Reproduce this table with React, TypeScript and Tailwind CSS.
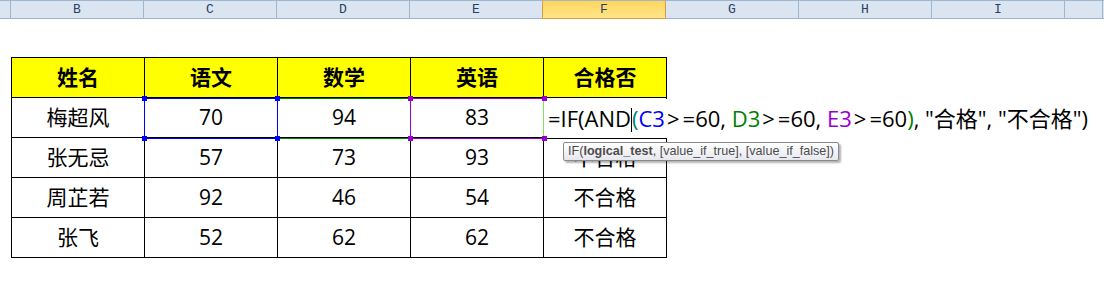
import React from "react";

const cols = [
  { l: "", w: 11 },
  { l: "B", w: 133 },
  { l: "C", w: 133 },
  { l: "D", w: 133 },
  { l: "E", w: 133 },
  { l: "F", w: 124, active: true },
  { l: "G", w: 133 },
  { l: "H", w: 133 },
  { l: "I", w: 133 },
  { l: "", w: 38 },
];

const rows = [
  ["梅超风", "70", "94", "83", ""],
  ["张无忌", "57", "73", "93", "不合格"],
  ["周芷若", "92", "46", "54", "不合格"],
  ["张飞", "52", "62", "62", "不合格"],
];

const heads = ["姓名", "语文", "数学", "英语", "合格否"];
const widths = ["w-[133px]", "w-[133px]", "w-[133px]", "w-[133px]", "w-[123px]"];

function Handles({ color }: { color: string }) {
  const base = "absolute w-[5px] h-[5px] " + color;
  return (
    <>
      <div className={base + " -left-[3px] -top-[3px]"} />
      <div className={base + " -right-[3px] -top-[3px]"} />
      <div className={base + " -left-[3px] -bottom-[3px]"} />
      <div className={base + " -right-[3px] -bottom-[3px]"} />
    </>
  );
}

const ge = <span className="ml-[2px] mr-[3px]">&gt;</span>;

export default function App() {
  return (
    <div
      className="relative w-[1104px] h-[281px] bg-white overflow-hidden"
      style={{ fontFamily: '"Open Sans", "Noto Sans CJK SC", sans-serif' }}
    >
      {/* column headers */}
      <div className="flex h-[19px] bg-[#dbe5f1] border-t border-b border-[#9eb6ce]">
        {cols.map((c, i) => (
          <div
            key={i}
            className={
              "shrink-0 flex items-center justify-center text-[13px] leading-none text-[#27415f] " +
              (c.active
                ? "bg-gradient-to-b from-[#ffd45a] to-[#ffe78c] border-l border-r border-[#e29a3b] -ml-px -mb-px border-b"
                : "border-r border-[#9eb6ce]")
            }
            style={{ width: c.w, fontFamily: '"Liberation Mono", monospace' }}
          >
            {c.l}
          </div>
        ))}
      </div>

      {/* table */}
      <div className="ml-[11px] mt-[38px] w-fit border-l border-t border-black">
        <div className="flex h-[40px] bg-[#ffff00]">
          {heads.map((h, i) => (
            <div
              key={i}
              className={
                widths[i] +
                " shrink-0 border-r border-b border-black flex items-center justify-center text-[21px] font-bold text-black"
              }
            >
              {h}
            </div>
          ))}
        </div>
        {rows.map((r, ri) => (
          <div key={ri} className="flex h-[40px]">
            {r.map((v, i) => (
              <div
                key={i}
                className={
                  widths[i] +
                  " shrink-0 border-r border-b border-black flex items-center justify-center text-[21px] text-black"
                }
              >
                {v}
              </div>
            ))}
          </div>
        ))}
      </div>

      {/* formula editor overlay in F3 */}
      <div className="absolute left-[544px] top-[99px] w-[560px] h-[39px] bg-white pl-[4px] text-[22px] leading-[39px] text-black whitespace-pre">
        <span>=IF(AND</span>
        <span className="inline-block w-px h-[24px] bg-black align-[-5px]" />
        <span className="text-[#008080]">(</span>
        <span className="text-[#0000ff]">C3</span>
        <span>{ge}=60, </span>
        <span className="text-[#008000]">D3</span>
        <span>{ge}=60, </span>
        <span className="text-[#9900cc]">E3</span>
        <span>{ge}=60</span>
        <span className="text-[#008000]">)</span>
        <span>, "合格", "不合格")</span>
      </div>
      <div className="absolute left-[543px] top-[98px] w-px h-[41px] bg-[#80e060]" />
      <div className="absolute left-[543px] top-[138px] w-[124px] h-px bg-black" />

      {/* reference range highlights */}
      <div className="absolute left-[277px] top-[98px] w-[134px] h-[41px] border border-[#008000]">
        <Handles color="bg-[#008000]" />
      </div>
      <div className="absolute left-[410px] top-[98px] w-[134px] h-[41px] border border-[#9900cc] border-r-0">
        <Handles color="bg-[#9900cc]" />
      </div>
      <div className="absolute left-[144px] top-[98px] w-[134px] h-[41px] border border-[#0000ff]">
        <Handles color="bg-[#0000ff]" />
      </div>

      {/* tooltip */}
      <div
        className="absolute left-[563px] top-[142px] h-[19px] px-[4px] flex items-center rounded-[2px] border border-[#8a8a8a] bg-gradient-to-b from-white to-[#e7e8ee] text-[12.6px] text-[#4c4c4c] whitespace-nowrap shadow-[2px_2px_2px_rgba(0,0,0,0.3)]"
        style={{ fontFamily: '"Liberation Sans", sans-serif' }}
      >
        IF(<span className="font-bold">logical_test</span>, [value_if_true], [value_if_false])
      </div>
    </div>
  );
}
